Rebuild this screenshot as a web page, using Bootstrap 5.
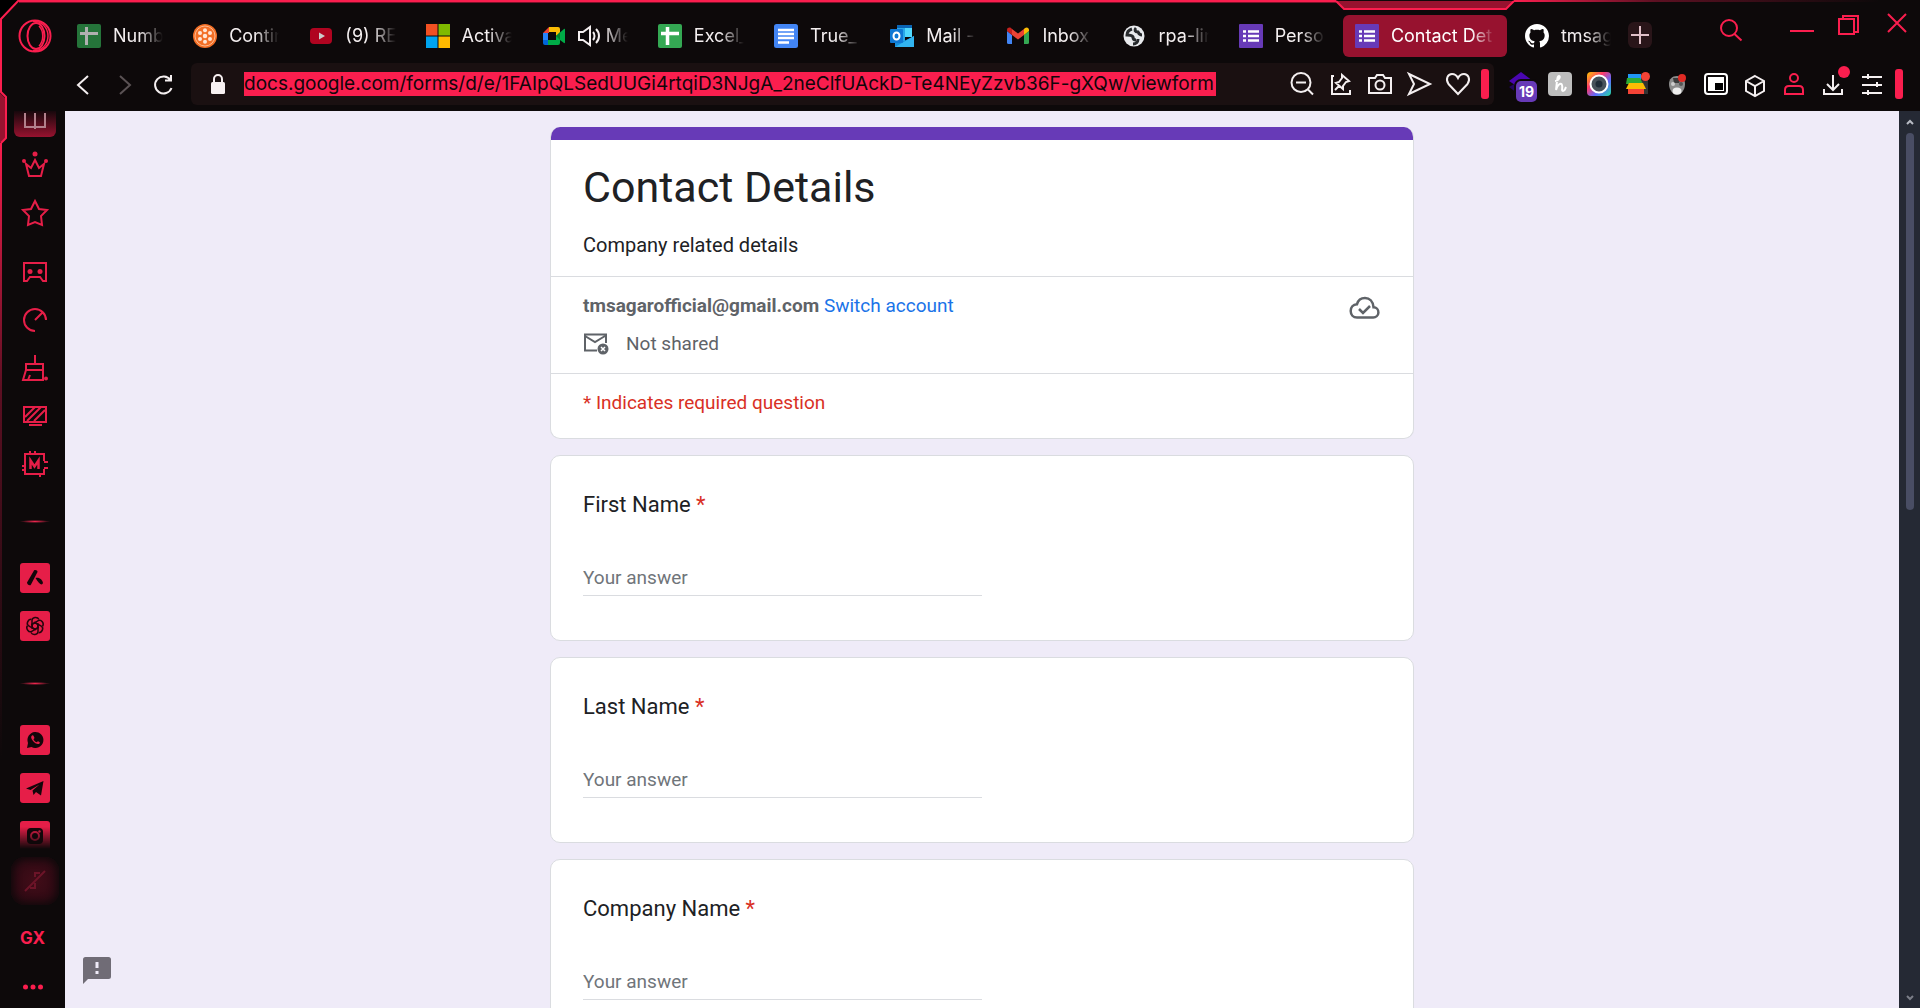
<!DOCTYPE html>
<html lang="en">
<head>
<meta charset="utf-8">
<meta name="viewport" content="width=device-width, initial-scale=1">
<title>Contact Details</title>
<link href="https://cdn.jsdelivr.net/npm/bootstrap@5.3.0/dist/css/bootstrap.min.css" rel="stylesheet">
<style>
  :root { --gx: #fa1e4e; --gx-soft: #e61e48; --gx-deep: #97122f; --chrome: #0d090a; --ink: #202124; --muted: #5f6368; --rule: #dadce0; }
  body { background: var(--chrome); font-family: Roboto, "Liberation Sans", sans-serif; color: var(--ink); }
  svg { display: block; flex: none; overflow: visible; }
  .ln { fill: none; stroke: currentColor; stroke-width: 2; }
  .plain { background: none; border: 0; padding: 0; color: inherit; display: flex; align-items: center; justify-content: center; flex: none; }

  .browser-head { font-family: Inter, "Liberation Sans", sans-serif; color: #f4eff0; height: 111px; }
  .tab-row { height: 57px; padding-top: 15px; }
  .corner { width: 65px; color: var(--gx); padding-left: 5px; }
  .tab-strip { gap: 6px; min-width: 0; }
  .tab-item { flex: 1 1 0; min-width: 0; height: 42px; padding: 0 12px; gap: 12px; border-radius: 6px; color: inherit; text-decoration: none; font-size: 18px; line-height: 24px; }
  .tab-item.current { flex: 0 0 164px; background: var(--gx-deep); color: #fff; }
  .tab-name { flex: 1; min-width: 0; overflow: hidden; white-space: nowrap; -webkit-mask-image: linear-gradient(90deg, #000 calc(100% - 24px), transparent); mask-image: linear-gradient(90deg, #000 calc(100% - 24px), transparent); }
  .sound { margin-right: -6px; }
  .window-side { width: 297px; color: var(--gx); padding: 0 13px 0 5px; }
  .add-tab { width: 24px; height: 26px; border-radius: 6px; background: #291519; color: #e0c0c8; margin-top: 7px; }
  .tool-row { height: 54px; padding: 6px 17px 0 65px; }
  .nav-buttons { width: 126px; padding-left: 12px; gap: 30px; }
  .reload { margin-left: -7px; }
  .dim { color: #5a5254; }
  .address { height: 42px; background: #1a1011; border-radius: 6px; padding: 0 5px 0 20px; min-width: 0; }
  .address input { width: 972px; height: 24px; margin-left: 18px; border: 0; padding: 0; background: var(--gx); color: #10060a; font-size: 19px; line-height: 24px; outline: 0; min-width: 0; }
  .tools { gap: 15px; }
  .addons { gap: 15px; padding-left: 15px; height: 42px; }
  .pill { width: 8px; height: 30px; border-radius: 3px; background: var(--gx); margin-left: -4px; }
  .count { right: -4px; bottom: -6px; width: 21px; height: 21px; border-radius: 5px; background: #673ab7; box-shadow: 0 0 0 2px var(--chrome); color: #fff; font-size: 14px; line-height: 21px; font-weight: 700; }

  .side { width: 65px; color: var(--gx-soft); padding-left: 5px; }
  .side .plain { height: 48px; width: 60px; }
  .side .second { margin-top: 11px; }
  .side .split { height: 66px; display: flex; flex: none; align-items: center; justify-content: center; }
  .side .split::before { content: ""; width: 30px; height: 3px; background: radial-gradient(closest-side, #f0274f, transparent); }
  .side .book { height: 26px; width: 42px; border-radius: 0 0 6px 6px; background: linear-gradient(#17080c, var(--gx-deep)); color: #b2808c; align-items: flex-start; margin-bottom: 4px; }
  .side .cut { height: 37px; padding-top: 9px; align-items: flex-start; overflow: hidden; -webkit-mask-image: linear-gradient(#000 40%, transparent); mask-image: linear-gradient(#000 40%, transparent); }
  .side .glow { background: radial-gradient(#420c18, #2c0a13 80%); border-radius: 14px; box-shadow: inset 0 0 9px 2px var(--chrome); width: 48px; margin-top: 8px; color: #6c1428; }
  .side .gx-label { font: 700 17px/20px Inter, sans-serif; color: var(--gx); margin-top: 9px; padding-right: 5px; }
  .side .more { height: 46px; margin-top: 2px; padding-right: 5px; color: var(--gx); }

  .page-area { background: #efebf8; padding-top: 16px; min-height: 0; }
  .form-col { width: 864px; max-width: 100%; gap: 16px; }
  .sheet { background: #fff; border: 1px solid var(--rule); border-radius: 10px; flex: none; }
  .intro { border-top: 0; overflow: hidden; }
  .intro .band { height: 13px; background: #673ab7; margin: 0 -1px; }
  .part { padding: 14px 32px; line-height: 30px; border-bottom: 1px solid var(--rule); font-size: 19px; color: var(--muted); }
  .part:last-child { border-bottom: 0; padding-bottom: 20px; }
  .part.top { padding: 20px 32px 16px; font-size: 20px; color: var(--ink); }
  .part h1 { font-size: 43px; line-height: 54px; font-weight: 400; margin: 0 0 16px; }
  .part a { color: #1a73e8; text-decoration: none; }
  .part.red, .red { color: #d93025; }
  .ask { padding: 34px 32px 44px; }
  .ask label { display: block; font-size: 22px; line-height: 30px; margin-bottom: 42px; }
  .ask input { display: block; width: 50%; border: 0; border-bottom: 1px solid var(--rule); border-radius: 0; padding: 0 0 3px; font-size: 19px; line-height: 30px; height: 34px; color: var(--ink); background: none; outline: 0; }
  .ask input::placeholder { color: #70757a; opacity: 1; }
  .report { position: absolute; left: 18px; bottom: 24px; color: #706c76; }
  .bar { width: 21px; background: #252934; color: #b8bbc4; padding: 7px 0 6px; }
  .bar .thumb { width: 8px; height: 377px; border-radius: 4px; background: #494d64; margin-top: 7px; }
  .frame { position: absolute; left: 0; top: 0; pointer-events: none; }
  .notch { position: absolute; top: 0; right: 406px; pointer-events: none; }
  .topline { position: absolute; top: 0; left: 19px; right: 584px; height: 3px; background: linear-gradient(var(--gx) 67%, #7a1029 67%); }
  .fadeline { position: absolute; top: 0; right: 0; width: 406px; height: 2px; background: linear-gradient(90deg, var(--gx), #5c1022 35%, transparent 90%); }
</style>
<script src="https://cdn.jsdelivr.net/npm/bootstrap@5.3.0/dist/js/bootstrap.bundle.min.js"></script>
</head>
<body>
<div class="d-flex flex-column vh-100 overflow-hidden position-relative">
  <header class="browser-head flex-shrink-0">
    <div class="tab-row d-flex">
      <div class="corner d-flex justify-content-center flex-shrink-0">
        <button class="plain" aria-label="Menu"><svg width="34" height="34" class="ln"><circle cx="17" cy="17" r="15.500"/><ellipse cx="18" cy="17" rx="8.500" ry="13"/><path d="M15 2.200c7-.5 15 5 15 14.800s-8 15.300-15 14.800M21 7c5 5 5 15 0 20" stroke-width="1.500"/></svg></button>
      </div>
      <nav class="tab-strip d-flex flex-grow-1" aria-label="Tabs">
        <a href="#" class="tab-item d-flex align-items-center"><svg width="24" height="24"><rect width="24" height="24" rx="2" fill="#25743a"/><path d="M3 9.500h18M9.500 3v18" stroke="#b0b0b0" stroke-width="3"/></svg><span class="tab-name">Numb</span></a>
        <a href="#" class="tab-item d-flex align-items-center"><svg width="24" height="24"><circle cx="12" cy="12" r="12" fill="#f36f26"/><circle cx="12" cy="12" r="10" fill="none" stroke="#ffb98e" stroke-width="1"/><g fill="#ffe6d6"><circle cx="12" cy="12" r="2.200"/><circle cx="12" cy="6.200" r="2"/><circle cx="12" cy="17.800" r="2"/><circle cx="7" cy="9" r="2"/><circle cx="17" cy="9" r="2"/><circle cx="7" cy="15" r="2"/><circle cx="17" cy="15" r="2"/></g></svg><span class="tab-name">Contin</span></a>
        <a href="#" class="tab-item d-flex align-items-center"><svg width="24" height="24"><rect x="1" y="4" width="22" height="16" rx="4" fill="#b00420"/><path d="M10 8.500v7l6-3.500z" fill="#ccc"/></svg><span class="tab-name">(9) RE</span></a>
        <a href="#" class="tab-item d-flex align-items-center"><svg width="24" height="24"><path fill="#f25022" d="M0 0h11.500v11.500H0z"/><path fill="#7fba00" d="M12.500 0H24v11.500H12.500z"/><path fill="#00a4ef" d="M0 12.500h11.500V24H0z"/><path fill="#ffb900" d="M12.500 12.500H24V24H12.500z"/></svg><span class="tab-name">Activa</span></a>
        <a href="#" class="tab-item d-flex align-items-center"><svg width="24" height="24"><path fill="#ea4335" d="M1 9l6-6v6z"/><path fill="#fbbc04" d="M7 3h9a2 2 0 0 1 2 2v5l-4 2V8H7z"/><path fill="#2684fc" d="M1 9h5v7H1z"/><path fill="#0066da" d="M1 16h5v5H3a2 2 0 0 1-2-2z"/><path fill="#00ac47" d="M6 16h8v-4l8-7c.6-.4 1 0 1 .5v13c0 .5-.5.900-1 .5l-4-3V19a2 2 0 0 1-2 2H6z"/><path fill="#00832d" d="M14 12l4-4v8z"/></svg><svg class="ln sound" width="22" height="20"><path d="M1 6h4l7-5v18l-7-5H1zM15 6c2 2 2 6 0 8M18 3c4 4 4 10 0 14"/></svg><span class="tab-name">Me</span></a>
        <a href="#" class="tab-item d-flex align-items-center"><svg width="24" height="24"><rect width="24" height="24" rx="2" fill="#34a853"/><path d="M3 9.500h18M9.500 3v18" stroke="#fff" stroke-width="3.500"/></svg><span class="tab-name">Excel_</span></a>
        <a href="#" class="tab-item d-flex align-items-center"><svg width="24" height="24"><rect width="24" height="24" rx="2.500" fill="#4285f4"/><path d="M4 6h16M4 10h16M4 14h16M4 18.500h11" stroke="#fff" stroke-width="2.500"/></svg><span class="tab-name">True_</span></a>
        <a href="#" class="tab-item d-flex align-items-center"><svg width="24" height="24"><path fill="#0a64b4" d="M7 1h15v6H7z"/><path fill="#28a8ea" d="M7 4h8v14H7z"/><path fill="#50d9ff" d="M15 4h7v9h-7z"/><path fill="#1490df" d="M5 12l9 5 10-5v11H5z"/><path fill="#32b4f0" d="M5 23l19-11v11z"/><rect y="5" width="13" height="14" rx="1" fill="#0f78d4"/><ellipse cx="6.500" cy="12" rx="3" ry="3.500" fill="none" stroke="#fff" stroke-width="2"/></svg><span class="tab-name">Mail -</span></a>
        <a href="#" class="tab-item d-flex align-items-center"><svg width="24" height="24"><path fill="#4285f4" d="M1 7l5 4v9H2.500A1.500 1.500 0 0 1 1 18.500z"/><path fill="#34a853" d="M18 11l5-4v11.500a1.500 1.500 0 0 1-1.500 1.500H18z"/><path fill="#ea4335" d="M6 5l6 4.500L18 5v6l-6 4.500L6 11z"/><path fill="#c5221f" d="M1 6c0-2.500 2.500-3 4-2l1 1v6L1 7z"/><path fill="#fbbc04" d="M18 5l1-1c2-1.200 4-.2 4 2v1l-5 4z"/></svg><span class="tab-name">Inbox</span></a>
        <a href="#" class="tab-item d-flex align-items-center"><svg width="24" height="24"><circle cx="11" cy="12" r="10.500" fill="#e8eaed"/><path d="M9 5c-3 1-5 3-5 6 3 0 5 0 6 2 0 2 1 3 3 3M13 4c-2 2-1 4 2 4 1 2 2 3 4 3M10 20c3 0 5-2 5-5" fill="none" stroke="#26292c" stroke-width="3"/></svg><span class="tab-name">rpa-lin</span></a>
        <a href="#" class="tab-item d-flex align-items-center"><svg width="24" height="24"><rect width="24" height="24" rx="1" fill="#673ab7"/><path d="M9 7.500h11M9 12h11M9 16.500h11M4 7.500h3M4 12h3M4 16.500h3" stroke="#fff" stroke-width="2.500"/></svg><span class="tab-name">Perso</span></a>
        <a href="#" class="tab-item current d-flex align-items-center" aria-current="page"><svg width="24" height="24"><rect width="24" height="24" rx="1" fill="#673ab7"/><path d="M9 7.500h11M9 12h11M9 16.500h11M4 7.500h3M4 12h3M4 16.500h3" stroke="#fff" stroke-width="2.500"/></svg><span class="tab-name">Contact Det</span></a>
        <a href="#" class="tab-item d-flex align-items-center"><svg width="24" height="24" viewBox="0 0 16 16"><path fill="#fff" d="M8 0C3.580 0 0 3.580 0 8c0 3.540 2.290 6.530 5.470 7.590.4.070.55-.17.55-.38 0-.19-.01-.82-.01-1.490-2.010.37-2.530-.49-2.690-.94-.09-.23-.48-.94-.82-1.130-.28-.15-.68-.52-.01-.53.63-.01 1.080.58 1.230.82.72 1.210 1.870.87 2.330.66.070-.52.280-.87.510-1.070-1.780-.2-3.640-.89-3.640-3.950 0-.87.310-1.590.82-2.150-.08-.2-.36-1.020.08-2.120 0 0 .67-.21 2.200.82.640-.18 1.320-.27 2-.27s1.360.09 2 .27c1.530-1.040 2.200-.82 2.200-.82.440 1.100.160 1.920.080 2.120.510.560.820 1.270.820 2.150 0 3.070-1.870 3.750-3.650 3.950.290.250.540.730.540 1.480 0 1.070-.010 1.930-.010 2.200 0 .210.150.460.550.380A8.010 8.010 0 0 0 16 8c0-4.420-3.580-8-8-8z"/></svg><span class="tab-name">tmsag</span></a>
      </nav>
      <div class="window-side d-flex align-items-start flex-shrink-0">
        <button class="plain add-tab" aria-label="New tab"><svg width="18" height="18" class="ln"><path d="M9 0v18M0 9h18"/></svg></button>
        <div class="d-flex ms-auto align-items-start">
          <button class="plain mt-1 me-5" aria-label="Search"><svg width="22" height="22" class="ln" stroke="#e61e48"><circle cx="9" cy="9" r="8"/><path d="M14.500 15l7 6.500"/></svg></button>
          <button class="plain" aria-label="Minimize"><svg width="24" height="32" class="ln"><path d="M0 16h24"/></svg></button>
          <button class="plain ms-4" aria-label="Restore"><svg width="21" height="20" class="ln"><path d="M1 4h15v15H1zM5 4V1h15v16h-4"/></svg></button>
          <button class="plain ms-4" aria-label="Close"><svg width="24" height="18" class="ln"><path d="M5 -1l18 18M23 -1L5 17"/></svg></button>
        </div>
      </div>
    </div>
    <div class="tool-row d-flex align-items-start">
      <div class="nav-buttons d-flex align-items-center h-100 flex-shrink-0 pb-1">
        <button class="plain" aria-label="Back"><svg width="12" height="20" class="ln"><path d="M11 1L1 10l10 9"/></svg></button>
        <button class="plain dim" aria-label="Forward"><svg width="12" height="20" class="ln"><path d="M1 1l10 9-10 9"/></svg></button>
        <button class="plain reload" aria-label="Reload"><svg width="19" height="20" class="ln"><path d="M16.500 5A8.500 8.500 0 1 0 17.500 13M17 0v5.500h-6"/></svg></button>
      </div>
      <div class="address d-flex align-items-center flex-grow-1">
        <svg width="15" height="20"><rect y="8" width="14" height="12" rx="1.500" fill="#f7f0f1"/><path d="M3 9V5a4 4 0 0 1 8 0v4" fill="none" stroke="#f7f0f1" stroke-width="2"/></svg>
        <input type="text" aria-label="Address" value="docs.google.com/forms/d/e/1FAIpQLSedUUGi4rtqiD3NJgA_2neClfUAckD-Te4NEyZzvb36F-gXQw/viewform">
        <div class="tools d-flex align-items-center ms-auto flex-shrink-0">
          <button class="plain" aria-label="Zoom out"><svg width="24" height="24" class="ln"><circle cx="11" cy="10.500" r="9.500"/><path d="M6 10.500h10M18 17.500l5 5"/></svg></button>
          <button class="plain" aria-label="Pin"><svg width="24" height="24" class="ln"><path d="M5 4H3v18h18v-4M13 3l7 6-3 1-3 4 0 3-7-6 3-1 3-4zM10 14l-4 4"/></svg></button>
          <button class="plain" aria-label="Snapshot"><svg width="24" height="24" class="ln"><path d="M1 6h6l2-3h6l2 3h6v15H1z"/><circle cx="12" cy="13" r="4.500"/></svg></button>
          <button class="plain" aria-label="Send"><svg width="24" height="24" class="ln"><path d="M2 2l21 10L2 22l5-10z"/></svg></button>
          <button class="plain" aria-label="Favourite"><svg width="24" height="24" class="ln"><path d="M12 22L2.500 12C-1 7 2 2 6 2c3 0 5 2 6 4 1-2 3-4 6-4 4 0 7 5 3.500 10z"/></svg></button>
          <span class="pill"></span>
        </div>
      </div>
      <div class="addons d-flex align-items-center flex-shrink-0">
        <button class="plain position-relative" aria-label="Extension, 19 new"><svg width="24" height="24"><path d="M0 15l12-7 12 7-12 9z" fill="#22055e"/><path d="M0 9L12 0l12 9-12 8z" fill="#4a06b0"/></svg><span class="count position-absolute text-center">19</span></button>
        <button class="plain" aria-label="Honey"><svg width="24" height="24"><rect width="24" height="24" rx="4" fill="#bdbdbd"/><path d="M7 9c4 0 6-5 4-5s-2 6-3 14c1-5 5-8 6-5s-1 6 1 6 2-2 3-4" fill="none" stroke="#fff" stroke-width="2"/></svg></button>
        <button class="plain" aria-label="Screenshot"><svg width="24" height="24"><defs><linearGradient id="rb" x2="1" y2="1"><stop stop-color="#ffc800"/><stop offset=".35" stop-color="#ff3b6b"/><stop offset=".65" stop-color="#5d6bff"/><stop offset="1" stop-color="#20e0a0"/></linearGradient></defs><rect width="24" height="24" rx="4" fill="url(#rb)"/><circle cx="12" cy="12" r="8.500" fill="#47525b" stroke="#fff" stroke-width="2"/><circle cx="12" cy="12" r="3.500" fill="#1f2c38"/></svg></button>
        <button class="plain" aria-label="Bookshelf"><svg width="24" height="24"><path d="M14 3h8v19h-8z" fill="#333"/><path d="M2 2h13v6H2z" fill="#2196f3"/><path d="M1 6h13l3 6H0z" fill="#2eac34"/><path d="M3 11h14l3 6H0z" fill="#fbbc04"/><path d="M2 17h16v5H2z" fill="#f44336"/><circle cx="19.500" cy="4.500" r="4.500" fill="#f44336"/></svg></button>
        <button class="plain" aria-label="Guard"><svg width="24" height="24"><path d="M4 12c0-5 3-8 8-8s8 3 8 8c0 6-4 11-8 11s-8-5-8-11z" fill="#8b8b8b"/><path d="M8 6h8l-2 5H9z" fill="#3a3a3a"/><ellipse cx="12" cy="19" rx="4.500" ry="3.500" fill="#eee"/><circle cx="8" cy="12" r="2" fill="#ccc"/><circle cx="16" cy="12" r="2" fill="#555"/><circle cx="17" cy="6" r="4" fill="#e02a24"/></svg></button>
        <button class="plain" aria-label="Picture in picture"><svg width="24" height="24"><rect x="1" y="2" width="22" height="20" rx="3" fill="none" stroke="#fff" stroke-width="2"/><path d="M4 5h16v14H4z" fill="#fff"/><path d="M11 11h8v7h-8z"/></svg></button>
        <button class="plain" aria-label="Extensions"><svg width="24" height="24" class="ln"><path d="M12 4l9 5v10l-9 5-9-5V9zM3 9l9 5 9-5M12 14v10"/></svg></button>
        <button class="plain text-danger-emphasis" aria-label="Profile"><svg width="24" height="24" fill="none" stroke="#fa1e4e" stroke-width="2"><circle cx="12" cy="6" r="4"/><path d="M3 22v-4c0-3 2-4 4-4h10c2 0 4 1 4 4v4z"/></svg></button>
        <button class="plain" aria-label="Downloads"><svg width="24" height="24" class="ln"><path d="M12 3v15M6 12l6 6 6-6M3 17v5h18v-5"/><circle cx="23" cy="0" r="6" fill="#fa1e4e" stroke="none"/></svg></button>
        <button class="plain" aria-label="Settings"><svg width="24" height="24" class="ln"><path d="M2 5h20M2 13h20M2 21h20M8 2v5M17 10v5M8 18v5"/></svg></button>
        <span class="pill"></span>
      </div>
    </div>
  </header>

  <div class="d-flex flex-grow-1 overflow-hidden">
    <aside class="side d-flex flex-column align-items-center flex-shrink-0">
      <button class="plain book" aria-label="Workspace"><svg width="22" height="18" class="ln"><path d="M1 2v14h20V2M11 2v16"/></svg></button>
      <button class="plain" aria-label="Crown"><svg width="28" height="28" class="ln"><path d="M5 13l3 12h12l3-12-5 4-4-8-4 8z"/><g fill="currentColor" stroke="none"><circle cx="14" cy="3" r="2.500"/><circle cx="3" cy="10" r="2"/><circle cx="25" cy="10" r="2"/></g></svg></button>
      <button class="plain" aria-label="Bookmarks"><svg width="28" height="28" class="ln"><path d="M14 2l4 8 8 1-6 6 1 9-7-3-7 3 1-9-6-6 8-1z"/></svg></button>
      <button class="plain second" aria-label="Gaming"><svg width="24" height="20" class="ln"><path d="M1 1h22v18h-3l-3-4H7l-3 4H1z"/><circle cx="7" cy="9.500" r="2.500" fill="currentColor" stroke="none"/><circle cx="17" cy="9.500" r="2.500" fill="currentColor" stroke="none"/></svg></button>
      <button class="plain" aria-label="Limiter"><svg width="24" height="24" class="ln"><path d="M12 23A11 11 0 1 1 23 12M12 12l7-7"/></svg></button>
      <button class="plain" aria-label="Cleaner"><svg width="26" height="26" class="ln"><path d="M13 0v9M4 9h17v6H4zM4 15L1 25h20V15M8 20l-2 5"/><circle cx="24" cy="23.500" r="2" fill="currentColor" stroke="none"/></svg></button>
      <button class="plain" aria-label="Mods"><svg width="24" height="20" class="ln"><path d="M1 1h22v15H1zM6 19h13M2 11L12 1M4 15L18 1M11 15L22 4"/></svg></button>
      <button class="plain" aria-label="Memory"><svg width="26" height="26" class="ln"><path d="M22 10V3H3v20h19v-5M26 11h-4M26 17h-4M8 0v3M13 0v3M0 15h3M0 19h3M18 23v3"/><path d="M8.500 18V9.500l4 6 4-6V18" stroke-width="2.500"/></svg></button>
      <div class="split"></div>
      <button class="plain" aria-label="Launcher"><svg width="30" height="30"><rect width="30" height="30" rx="3" fill="#e61e48"/><path d="M14 7.500c1-1 4 0 3.500 1.500L11 21.500c-1 2-4 0-4-2zM15.500 15c4-1 7 2 7.500 5-1 3-4 1-7.500-5z" fill="#14060a"/></svg></button>
      <button class="plain" aria-label="ChatGPT"><svg width="30" height="30"><rect width="30" height="30" rx="3" fill="#e61e48"/><g fill="none" stroke="#26050d" stroke-width="1.500"><path id="pt" d="M12 11V9.500c0-3.500 5.500-4 7-1M12 9.500v7l4 2.300"/><use href="#pt" transform="rotate(60 15 15)"/><use href="#pt" transform="rotate(120 15 15)"/><use href="#pt" transform="rotate(180 15 15)"/><use href="#pt" transform="rotate(240 15 15)"/><use href="#pt" transform="rotate(300 15 15)"/></g></svg></button>
      <div class="split"></div>
      <button class="plain" aria-label="WhatsApp"><svg width="30" height="30"><rect width="30" height="30" rx="3" fill="#e61e48"/><path d="M7 23l1-5a8 8 0 1 1 3.500 4z" fill="#14060a"/><path d="M12 10.500c-1.500 1-1 3 1 5.500s5 4 6.500 2.500c1-1 0-1.500-1.500-2.300l-1.500 1c-1.500-.7-2.500-1.700-3-3l1-1.200c-.8-2-1.200-3.500-2.500-2.500z" fill="#e61e48"/></svg></button>
      <button class="plain" aria-label="Telegram"><svg width="30" height="30"><rect width="30" height="30" rx="3" fill="#e61e48"/><path d="M6 15.500L23.500 8 21 22.500l-5-3.500-2.500 3-1-4.500 7-6-9 5.500z" fill="#14060a"/></svg></button>
      <button class="plain cut" aria-label="Instagram"><svg width="30" height="30"><rect width="30" height="30" rx="3" fill="#e61e48"/><rect x="7" y="7" width="16" height="16" rx="4" fill="#14060a"/><circle cx="15" cy="15" r="4" fill="none" stroke="#e61e48" stroke-width="2"/><circle cx="19.500" cy="10.500" r="1.200" fill="#e61e48"/></svg></button>
      <button class="plain glow" aria-label="Collapse"><svg width="22" height="22" class="ln"><path d="M1 21L21 1M11 7V3h5M6 18h5v-5"/></svg></button>
      <button class="plain gx-label">GX</button>
      <button class="plain more" aria-label="More"><svg width="20" height="6" fill="currentColor"><circle cx="2.500" cy="3" r="2.500"/><circle cx="10" cy="3" r="2.500"/><circle cx="17.500" cy="3" r="2.500"/></svg></button>
    </aside>

    <main class="page-area flex-grow-1 d-flex justify-content-center position-relative overflow-hidden">
      <form class="form-col d-flex flex-column">
        <section class="sheet intro">
          <div class="band"></div>
          <div class="part top"><h1>Contact Details</h1><div>Company related details</div></div>
          <div class="part d-flex justify-content-between">
            <div>
              <div><strong>tmsagarofficial@gmail.com</strong> <a href="#">Switch account</a></div>
              <div class="d-flex align-items-center mt-2"><svg class="me-3" width="27" height="22"><path d="M14 17.500H2v-16h21V10M2 3l10 6 10-6" fill="none" stroke="#5f6368" stroke-width="2"/><circle cx="20" cy="16" r="5.500" fill="#5f6368"/><path d="M18 14l4 4M22 14l-4 4" stroke="#fff" stroke-width="1.500"/></svg>Not shared</div>
            </div>
            <svg class="mt-1" width="32" height="24" fill="none" stroke="#5f6368" stroke-width="2.500"><path d="M8 22.500h16a5 5 0 0 0 .5-10.300C24 6.500 20.500 3 16 3 12 3 9 5.500 8 9.200 4 9.500 1.700 12.500 1.700 16c0 3.600 2.500 6.500 6.300 6.500z"/><path d="M10 14l4 4 7-7"/></svg>
          </div>
          <div class="part red">* Indicates required question</div>
        </section>
        <section class="sheet ask"><label for="first">First Name <span class="red">*</span></label><input id="first" type="text" placeholder="Your answer"></section>
        <section class="sheet ask"><label for="last">Last Name <span class="red">*</span></label><input id="last" type="text" placeholder="Your answer"></section>
        <section class="sheet ask"><label for="company">Company Name <span class="red">*</span></label><input id="company" type="text" placeholder="Your answer"></section>
      </form>
      <button class="plain report" type="button" aria-label="Report a problem"><svg width="28" height="27"><path d="M2.500 0h23A2.500 2.500 0 0 1 28 2.500v17a2.500 2.500 0 0 1-2.500 2.500H5l-5 5V2.500A2.500 2.500 0 0 1 2.500 0z" fill="currentColor"/><path d="M14 5v6M14 14v3" stroke="#efebf8" stroke-width="3"/></svg></button>
    </main>
    <div class="bar d-flex flex-column align-items-center flex-shrink-0">
      <svg width="8" height="8" class="ln"><path d="M1 6l3-3 3 3"/></svg>
      <div class="thumb"></div>
      <svg class="mt-auto" width="8" height="8" fill="none" stroke="#7b7e88" stroke-width="2"><path d="M1 2l3 3 3-3"/></svg>
    </div>
  </div>

  <div class="topline"></div>
  <div class="fadeline"></div>
  <svg class="notch" width="178" height="11"><path d="M0 1l8 8h162l8-8" fill="#97122f" stroke="#fa1e4e" stroke-width="2"/></svg>
  <svg class="frame" width="10" height="900"><defs><linearGradient id="fd" gradientUnits="userSpaceOnUse" x1="0" y1="140" x2="0" y2="760"><stop stop-color="#fa1e4e"/><stop offset=".4" stop-color="#5c0f22"/><stop offset="1" stop-color="#0d090a"/></linearGradient></defs><path d="M0 0h18L0 19z" fill="#000"/><path d="M0 93l5 5v40l-5 5z" fill="#97122f"/><path d="M19 0L1 19v73l5 5v41l-5 5" fill="none" stroke="#fa1e4e" stroke-width="2"/><path d="M0 143h2v750H0z" fill="url(#fd)"/></svg>
</div>
</body>
</html>
